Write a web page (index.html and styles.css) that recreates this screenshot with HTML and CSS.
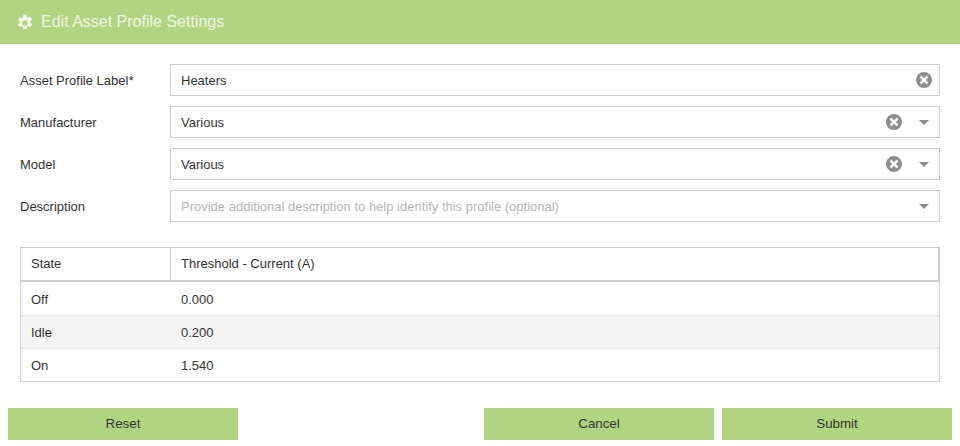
FILE: index.html
```html
<!DOCTYPE html>
<html lang="en">
<head>
<meta charset="utf-8">
<title>Edit Asset Profile Settings</title>
<link rel="stylesheet" href="styles.css">
</head>
<body>
<header class="title-bar">
  <svg class="gear" viewBox="0 0 16 16" aria-hidden="true"><path fill-rule="evenodd" d="M6.6.5h2.8l.4 2.1 1.1.6 2-.8 1.4 2.4-1.6 1.4v1.5l1.6 1.3-1.4 2.5-2-.8-1.1.6-.4 2.1H6.6l-.4-2.1-1.1-.6-2 .8-1.4-2.5 1.6-1.3V6.7L1.7 5.3l1.4-2.4 2 .8 1.1-.6zM8 5.6a2.4 2.4 0 1 0 0 4.8 2.4 2.4 0 0 0 0-4.8z"/></svg>
  <h1>Edit Asset Profile Settings</h1>
</header>
<main class="form">
  <div class="field">
    <label>Asset Profile Label*</label>
    <div class="control"><span class="value">Heaters</span>
      <svg class="clear" viewBox="0 0 16 16" aria-hidden="true"><path fill-rule="evenodd" d="M8 0a8 8 0 1 1 0 16A8 8 0 0 1 8 0zM5.4 3.6 3.6 5.4 6.2 8l-2.6 2.6 1.8 1.8L8 9.8l2.6 2.6 1.8-1.8L9.8 8l2.6-2.6-1.8-1.8L8 6.2z"/></svg>
    </div>
  </div>
  <div class="field">
    <label>Manufacturer</label>
    <div class="control"><span class="value">Various</span>
      <svg class="clear" viewBox="0 0 16 16" aria-hidden="true"><path fill-rule="evenodd" d="M8 0a8 8 0 1 1 0 16A8 8 0 0 1 8 0zM5.4 3.6 3.6 5.4 6.2 8l-2.6 2.6 1.8 1.8L8 9.8l2.6 2.6 1.8-1.8L9.8 8l2.6-2.6-1.8-1.8L8 6.2z"/></svg>
      <span class="caret"></span>
    </div>
  </div>
  <div class="field">
    <label>Model</label>
    <div class="control"><span class="value">Various</span>
      <svg class="clear" viewBox="0 0 16 16" aria-hidden="true"><path fill-rule="evenodd" d="M8 0a8 8 0 1 1 0 16A8 8 0 0 1 8 0zM5.4 3.6 3.6 5.4 6.2 8l-2.6 2.6 1.8 1.8L8 9.8l2.6 2.6 1.8-1.8L9.8 8l2.6-2.6-1.8-1.8L8 6.2z"/></svg>
      <span class="caret"></span>
    </div>
  </div>
  <div class="field">
    <label>Description</label>
    <div class="control"><span class="value placeholder">Provide additional description to help identify this profile (optional)</span>
      <span class="caret"></span>
    </div>
  </div>
  <div class="grid">
    <div class="row head"><div class="c1">State</div><div class="c2">Threshold - Current (A)</div></div>
    <div class="row"><div class="c1">Off</div><div class="c2">0.000</div></div>
    <div class="row alt"><div class="c1">Idle</div><div class="c2">0.200</div></div>
    <div class="row"><div class="c1">On</div><div class="c2">1.540</div></div>
  </div>
</main>
<footer class="actions">
  <button class="btn" type="button">Reset</button>
  <span class="spacer"></span>
  <button class="btn" type="button">Cancel</button>
  <button class="btn" type="button">Submit</button>
</footer>
</body>
</html>
```
FILE: styles.css
```css
* { box-sizing: border-box; }
html, body { margin: 0; padding: 0; }
body {
  width: 960px;
  height: 446px;
  overflow: hidden;
  background: #fff;
  color: #333;
  font-family: "Liberation Sans", sans-serif;
  font-size: 13px;
}
.title-bar {
  display: flex;
  align-items: center;
  height: 44px;
  padding-left: 16px;
  background: #b1d480;
  color: #f0f6e6;
}
.gear { width: 18px; height: 18px; fill: #f4f8ec; margin: 1px 7px 0 0; }
.title-bar h1 { margin: 0; font-size: 16px; font-weight: 400; }
.form { padding: 20px 20px 0; }
.field { display: flex; align-items: center; height: 32px; margin-bottom: 10px; }
.field label { width: 150px; flex: none; }
.control {
  display: flex;
  align-items: center;
  flex: 1;
  height: 32px;
  padding: 0 7px 0 10px;
  border: 1px solid #ccc;
}
.value { flex: 1; }
.placeholder { color: #b5b5b5; }
.clear { width: 16px; height: 16px; fill: #8c8c8c; }
.caret {
  width: 0;
  height: 0;
  margin-left: 17px;
  margin-right: 3px;
  border-left: 5px solid transparent;
  border-right: 5px solid transparent;
  border-top: 5px solid #8c8c8c;
}
.grid { margin-top: 25px; border: 1px solid #ccc; }
.row { display: flex; align-items: center; height: 33px; border-top: 1px solid #e6e6e6; }
.row.head { height: 34px; border-top: 0; border-bottom: 2px solid #ccc; border-right: 1px solid #ccc; }
.row.head .c2 { padding-bottom: 2px; }
.row.head .c1 { padding-bottom: 2px; }
.row.head + .row { border-top: 0; height: 33px; padding-top: 2px; }
.alt { background: #f5f5f5; }
.c1 { width: 150px; padding-left: 10px; height: 100%; display: flex; align-items: center; }
.head .c1 { border-right: 1px solid #ccc; }
.c2 { padding-left: 10px; }
.actions { display: flex; gap: 8px; padding: 26px 8px 0; }
.spacer { flex: 1; }
.btn {
  width: 230px;
  height: 32px;
  border: 0;
  padding: 0 0 2px;
  background: #b1d480;
  color: #333;
  font: inherit;
  font-size: 13.33px;
}
```
